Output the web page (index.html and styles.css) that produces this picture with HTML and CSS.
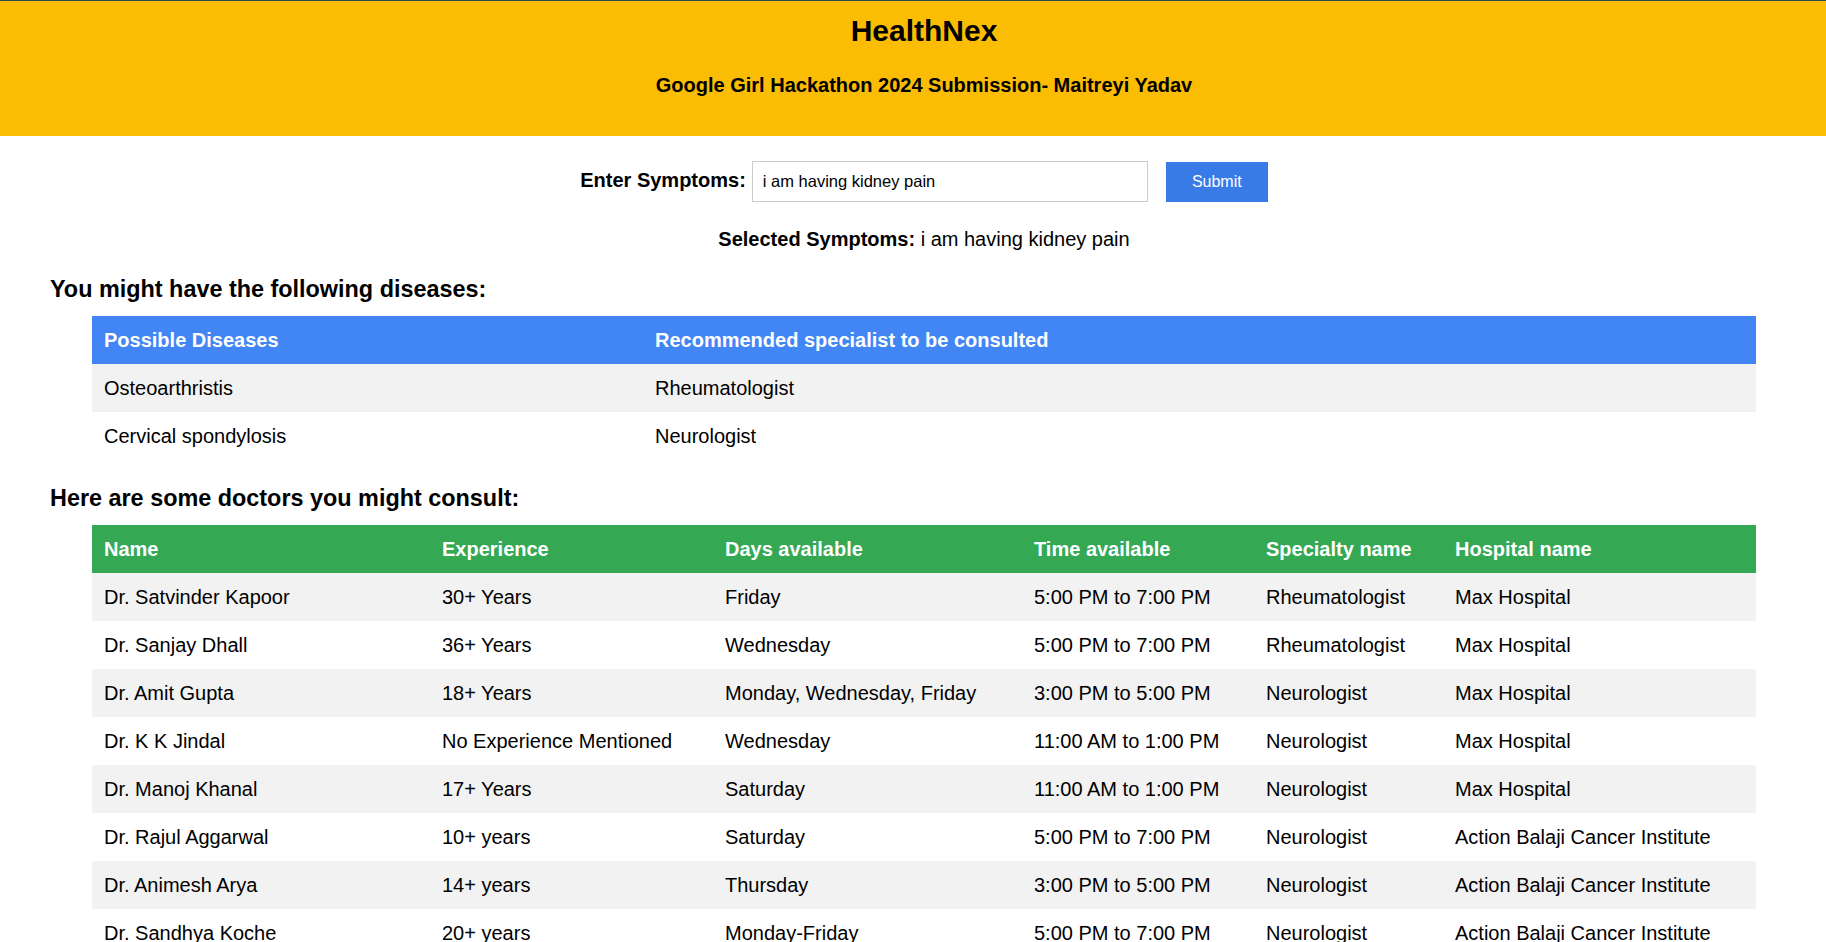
FILE: index.html
```html
<!DOCTYPE html>
<html lang="en">
<head>
<meta charset="utf-8">
<title>HealthNex</title>
<link rel="stylesheet" href="styles.css">
</head>
<body>
<header class="site-header">
  <h1 class="site-title">HealthNex</h1>
  <h3 class="site-subtitle">Google Girl Hackathon 2024 Submission- Maitreyi Yadav</h3>
</header>
<main class="content">
  <form class="symptom-form">
    <label class="symptom-label" for="symptoms">Enter Symptoms:</label>
    <input class="symptom-input" id="symptoms" type="text" value="i am having kidney pain">
    <button class="submit-btn" type="button">Submit</button>
  </form>
  <p class="selected"><strong>Selected Symptoms:</strong> i am having kidney pain</p>

  <h3 class="section-title">You might have the following diseases:</h3>
  <table class="data-table disease-table">
    <thead>
      <tr><th class="col-disease">Possible Diseases</th><th>Recommended specialist to be consulted</th></tr>
    </thead>
    <tbody>
      <tr><td>Osteoarthristis</td><td>Rheumatologist</td></tr>
      <tr><td>Cervical spondylosis</td><td>Neurologist</td></tr>
    </tbody>
  </table>

  <h3 class="section-title">Here are some doctors you might consult:</h3>
  <table class="data-table doctor-table">
    <thead>
      <tr>
        <th class="col-name">Name</th>
        <th class="col-exp">Experience</th>
        <th class="col-days">Days available</th>
        <th class="col-time">Time available</th>
        <th class="col-spec">Specialty name</th>
        <th>Hospital name</th>
      </tr>
    </thead>
    <tbody>
      <tr><td>Dr. Satvinder Kapoor</td><td>30+ Years</td><td>Friday</td><td>5:00 PM to 7:00 PM</td><td>Rheumatologist</td><td>Max Hospital</td></tr>
      <tr><td>Dr. Sanjay Dhall</td><td>36+ Years</td><td>Wednesday</td><td>5:00 PM to 7:00 PM</td><td>Rheumatologist</td><td>Max Hospital</td></tr>
      <tr><td>Dr. Amit Gupta</td><td>18+ Years</td><td>Monday, Wednesday, Friday</td><td>3:00 PM to 5:00 PM</td><td>Neurologist</td><td>Max Hospital</td></tr>
      <tr><td>Dr. K K Jindal</td><td>No Experience Mentioned</td><td>Wednesday</td><td>11:00 AM to 1:00 PM</td><td>Neurologist</td><td>Max Hospital</td></tr>
      <tr><td>Dr. Manoj Khanal</td><td>17+ Years</td><td>Saturday</td><td>11:00 AM to 1:00 PM</td><td>Neurologist</td><td>Max Hospital</td></tr>
      <tr><td>Dr. Rajul Aggarwal</td><td>10+ years</td><td>Saturday</td><td>5:00 PM to 7:00 PM</td><td>Neurologist</td><td>Action Balaji Cancer Institute</td></tr>
      <tr><td>Dr. Animesh Arya</td><td>14+ years</td><td>Thursday</td><td>3:00 PM to 5:00 PM</td><td>Neurologist</td><td>Action Balaji Cancer Institute</td></tr>
      <tr><td>Dr. Sandhya Koche</td><td>20+ years</td><td>Monday-Friday</td><td>5:00 PM to 7:00 PM</td><td>Neurologist</td><td>Action Balaji Cancer Institute</td></tr>
    </tbody>
  </table>
</main>
</body>
</html>
```

FILE: styles.css
```css
html, body {
  margin: 0;
  padding: 0;
  background: #ffffff;
}

body {
  font-family: "Liberation Sans", Arial, sans-serif;
  font-size: 20px;
  color: #000000;
}

.site-header {
  background: #fbbc04;
  border-top: 1px solid #2e4a56;
  padding: 12px 0 39px 22px;
  text-align: center;
}

.site-title {
  margin: 0;
  font-size: 30px;
  line-height: 36px;
  font-weight: bold;
}

.site-subtitle {
  margin: 24px 0 0;
  font-size: 20px;
  line-height: 24px;
  font-weight: bold;
}

.content {
  padding-left: 22px;
}

.symptom-form {
  display: flex;
  justify-content: center;
  align-items: center;
  margin: 25px 0 0;
}

.symptom-label {
  font-weight: bold;
  line-height: 24px;
  padding-bottom: 4px;
  margin-right: 6px;
}

.symptom-input {
  box-sizing: border-box;
  width: 396px;
  height: 41px;
  margin: 0;
  padding: 0 10px;
  border: 1px solid #cccccc;
  border-radius: 0;
  font-family: "Liberation Sans", Arial, sans-serif;
  font-size: 16.5px;
  color: #000000;
  background: #ffffff;
  outline: none;
}

.submit-btn {
  box-sizing: border-box;
  width: 102px;
  height: 40px;
  margin: 0 0 0 18px;
  padding: 0;
  border: 0;
  border-radius: 0;
  background: #387be6;
  color: #ffffff;
  font-family: "Liberation Sans", Arial, sans-serif;
  font-size: 16px;
  cursor: pointer;
}

.selected {
  margin: 25px 0 0;
  line-height: 24px;
  text-align: center;
}

.section-title {
  margin: 25px 0 13px 28px;
  font-size: 23.4px;
  line-height: 27px;
  font-weight: bold;
}

.data-table {
  width: calc(100% - 140px);
  margin: 0 auto;
  border-collapse: collapse;
  table-layout: fixed;
}

.data-table th,
.data-table td {
  box-sizing: border-box;
  padding: 12px;
  line-height: 24px;
  font-size: 20px;
  text-align: left;
  white-space: nowrap;
}

.data-table th {
  color: #ffffff;
  font-weight: bold;
}

.data-table tbody tr:nth-child(odd) {
  background: #f2f2f2;
}

.disease-table thead tr {
  background: #4285f4;
}

.doctor-table thead tr {
  background: #34a853;
}

.col-disease { width: 551px; }
.col-name { width: 338px; }
.col-exp { width: 283px; }
.col-days { width: 309px; }
.col-time { width: 232px; }
.col-spec { width: 189px; }
```
